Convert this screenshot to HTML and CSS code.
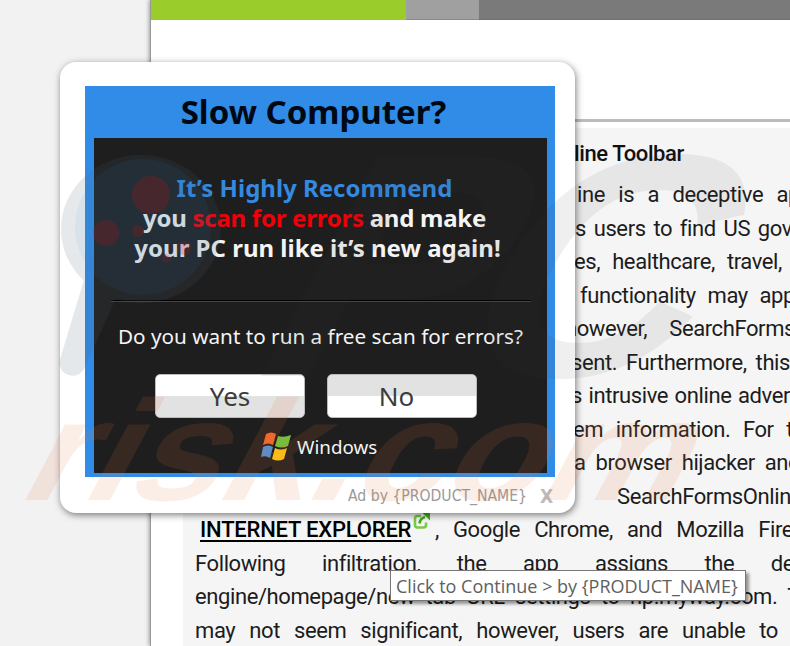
FILE: index.html
```html
<!DOCTYPE html>
<html lang="en">
<head>
  <meta charset="UTF-8">
  <meta name="viewport" content="width=device-width, initial-scale=1.0">
  <title>Online Toolbar</title>
  <link rel="stylesheet" href="styles.css">
</head>
<body>
  <div class="page">
    <div class="topbar">
      <div class="tab green"></div>
      <div class="tab light"></div>
      <div class="tab dark"></div>
    </div>
    <div class="divider"></div>
    <div class="article">
      <h2>line Toolbar</h2>
      <p class="line l1">ine is a deceptive ap</p>
      <p class="line l2">s users to find US gov</p>
      <p class="line l3">es, healthcare, travel,</p>
      <p class="line l4">functionality may app</p>
      <p class="line l5">however, SearchForms</p>
      <p class="line l6">sent. Furthermore, this</p>
      <p class="line l7">s intrusive online adver</p>
      <p class="line l8">em information. For t</p>
      <p class="line l9">a browser hijacker and</p>
      <p class="line l10">SearchFormsOnline</p>
      <p class="line l11"><a class="ie" href="#">INTERNET EXPLORER</a><svg class="ext" width="18" height="18" viewBox="0 0 18 18"><path d="M8 4H4.500Q2 4 2 6.500V13Q2 15.500 4.500 15.500H10.500Q13 15.500 13 13V10.500" fill="none" stroke="#7ac943" stroke-width="2.600"/><path d="M6.500 11.500Q7 6.500 12 5" fill="none" stroke="#3fae1c" stroke-width="2.600"/><path d="M9.500 1H17V8.500Z" fill="#3fae1c"/></svg>, Google Chrome, and Mozilla Fire</p>
      <p class="line l12">Following infiltration, the app assigns the de</p>
      <p class="line l13">engine/homepage/new tab URL settings to hp.myway.com. T</p>
      <p class="line l14">may not seem significant, however, users are unable to</p>
    </div>
  </div>

  <div class="popup">
    <div class="ad">
      <div class="ad-title">Slow Computer?</div>
      <div class="ad-body">
        <div class="msg blue">It’s Highly Recommend</div>
        <div class="msg m2">you <span class="red">scan for errors</span> and make</div>
        <div class="msg m3">your PC run like it’s new again!</div>
        <div class="rule"></div>
        <div class="question">Do you want to run a free scan for errors?</div>
        <div class="buttons">
          <button class="btn yes">Yes</button>
          <button class="btn no">No</button>
        </div>
        <div class="brand">
          <svg width="31" height="30" viewBox="0 0 31 30">
            <path d="M5 2Q10 -1 15 2L12 13Q7 10 2 13Z" fill="#f2672a"/>
            <path d="M17 4Q23 6 30 3L27 14Q20 17 14 14Z" fill="#7cbb3c"/>
            <path d="M2 15Q7 12 12 15L9 26Q5 23 0 25Z" fill="#4d8fd6"/>
            <path d="M14 16Q20 19 26 16L23 27Q17 30 11 27Z" fill="#fcc612"/>
          </svg>
          <span>Windows</span>
        </div>
      </div>
    </div>
    <div class="ad-by"><span>Ad by {PRODUCT_NAME}</span><b>X</b></div>
  </div>

  <svg class="watermark" width="790" height="646" viewBox="0 0 790 646">
    <g class="lens">
      <path d="M84 280L61 356A13 13 0 0 0 84 369L116 298Z"/>
      <ellipse cx="141" cy="229" rx="80" ry="74"/>
    </g>
    <circle class="glass" cx="143" cy="227" r="68"/>
    <g class="dots">
      <circle cx="151" cy="195" r="19"/>
      <circle cx="106" cy="233" r="13"/>
      <circle cx="138" cy="231" r="6"/>
      <circle cx="166" cy="258" r="4"/>
      <circle cx="184" cy="248" r="7"/>
    </g>
    <g class="pc" transform="translate(0 376) skewX(-28)">
      <text x="240" y="0" textLength="215" lengthAdjust="spacingAndGlyphs">P</text>
      <text x="435" y="0" textLength="235" lengthAdjust="spacingAndGlyphs">C</text>
    </g>
    <g class="risk" transform="translate(0 500) skewX(-28)">
      <text x="14" y="0" textLength="662" lengthAdjust="spacingAndGlyphs">risk.com</text>
    </g>
  </svg>

  <div class="tooltip">Click to Continue &gt; by {PRODUCT_NAME}</div>
</body>
</html>
```
FILE: styles.css
```css
* {
  box-sizing: border-box;
}
body {
  margin: 0;
  width: 790px;
  height: 646px;
  overflow: hidden;
  position: relative;
  background: #f2f2f2;
  font-family: Roboto, sans-serif;
}
.page {
  margin-left: 150px;
  height: 646px;
  background: #fff;
  border-left: 1px solid #999;
  box-shadow: -1px 0 4px rgba(0,0,0,0.35);
  overflow: hidden;
}
.topbar {
  display: flex;
  height: 20px;
}
.tab.green {
  width: 255px;
  background: #9acd2b;
}
.tab.light {
  width: 73px;
  background: #a0a0a0;
  border-bottom: 1px solid #888;
}
.tab.dark {
  flex: 1;
  background: #7a7a7a;
  border-bottom: 1px solid #707070;
}
.divider {
  height: 3px;
  margin-top: 99px;
  background: #bcbcbc;
}
.article {
  margin: 6px 0 0 32px;
  height: 530px;
  padding-top: 9px;
  background: #f5f5f5;
  color: #1c1c1c;
}
h2 {
  margin: 0 0 7px 391px;
  height: 34px;
  line-height: 34px;
  font-size: 22px;
  font-weight: 500;
  letter-spacing: -0.4px;
  color: #111;
}
.line {
  margin: 0 -2px 0 12px;
  height: 33.5px;
  line-height: 33.5px;
  font-size: 22px;
  font-weight: 400;
  letter-spacing: -0.4px;
  text-align: justify;
  text-align-last: justify;
  white-space: nowrap;
}
.l1 { margin-left: 394px; margin-right: -10px; }
.l2 { margin-left: 392px; }
.l3 { margin-left: 391px; margin-right: 8px; }
.l4 { margin-left: 397px; margin-right: -5px; }
.l5 { margin-left: 382px; margin-right: -5px; }
.l6 { margin-left: 388px; margin-right: 0; }
.l7 { margin-left: 388px; margin-right: 0; }
.l8 { margin-left: 390px; margin-right: -3px; }
.l9 { margin-left: 391px; margin-right: -10px; }
.l10 { margin-left: 434px; margin-right: -12px; }
.l11 { margin-left: 17px; margin-right: -3px; }
.l12 { margin-right: -4px; }
.l13 { margin-right: -10px; }
.l14 { margin-right: 12px; }
.ie {
  display: inline-block;
  width: 208px;
  height: 27px;
  line-height: 33.5px;
  text-align-last: left;
  letter-spacing: -0.2px;
  color: #000;
  font-weight: 500;
  text-decoration: underline;
  text-decoration-thickness: 2px;
  text-underline-offset: 3px;
}
.ext {
  margin: 0 4px 0 5px;
  position: relative;
  top: -7px;
}
.popup {
  position: absolute;
  left: 60px;
  top: 62px;
  width: 515px;
  height: 451px;
  padding: 24px 20px 0 25px;
  background: #fff;
  border-radius: 16px;
  box-shadow: 1px 2px 7px rgba(0,0,0,0.5);
  font-family: "Noto Sans", sans-serif;
}
.ad {
  width: 470px;
  height: 391px;
  padding: 0 8px 5px 9px;
  background: #318ce8;
}
.ad-title {
  height: 52px;
  padding-right: 14px;
  line-height: 51px;
  text-align: center;
  font-size: 33px;
  font-weight: bold;
  color: #000814;
  white-space: nowrap;
}
.ad-body {
  height: 335px;
  padding-top: 35px;
  background: #1e1e1e;
  color: #f4f4f4;
  text-align: center;
}
.msg {
  height: 30px;
  padding-right: 12px;
  line-height: 30px;
  font-size: 24px;
  font-weight: bold;
  white-space: nowrap;
}
.m2 {
  letter-spacing: -0.25px;
}
.m3 {
  padding-right: 6px;
}
.blue {
  color: #348ae0;
}
.red {
  color: #f00008;
}
.rule {
  margin: 37px 16px 0 17px;
  height: 2px;
  background: #000;
  border-bottom: 1px solid #444;
}
.question {
  height: 30px;
  margin-top: 19px;
  line-height: 30px;
  font-size: 20.7px;
  white-space: nowrap;
}
.buttons {
  display: flex;
  gap: 22px;
  margin: 23px 0 0 61px;
}
.btn {
  width: 150px;
  height: 44px;
  padding: 0;
  border: 1px solid #bbb;
  border-radius: 5px;
  font-family: "Noto Sans", sans-serif;
  font-size: 26px;
  line-height: 42px;
  color: #3c3c3c;
}
.yes {
  background: linear-gradient(#fff 50%, #e2e2e2 50%);
}
.no {
  padding-right: 11px;
  background: linear-gradient(#e2e2e2 50%, #fff 50%);
}
.brand {
  display: flex;
  align-items: center;
  gap: 5px;
  margin: 14px 0 0 167px;
  font-size: 18.8px;
  line-height: 30px;
}
.ad-by {
  display: flex;
  justify-content: flex-end;
  gap: 13px;
  padding-right: 1px;
  line-height: 39px;
  font-family: "DejaVu Sans Condensed", "DejaVu Sans", sans-serif;
  font-size: 15.6px;
  color: #999;
}
.ad-by b {
  width: 14px;
  font-size: 19px;
  color: #bbb;
}
.watermark {
  position: absolute;
  left: 0;
  top: 0;
  pointer-events: none;
  font-family: "Liberation Sans", sans-serif;
  font-weight: bold;
}
.lens {
  fill: #506070;
  opacity: 0.14;
}
.glass {
  fill: #3090e8;
  opacity: 0.07;
}
.dots {
  fill: #d01010;
  opacity: 0.2;
}
.pc {
  font-size: 318px;
  fill: #404040;
  opacity: 0.08;
}
.risk {
  font-size: 143px;
  fill: #e6783c;
  opacity: 0.12;
}
.tooltip {
  position: absolute;
  left: 390px;
  top: 570px;
  width: 356px;
  height: 31px;
  padding-left: 5px;
  border: 1px solid #767676;
  background: #fff;
  box-shadow: 3px 3px 3px rgba(0,0,0,0.4);
  font-family: "Open Sans", sans-serif;
  font-size: 18px;
  line-height: 30px;
  color: #606060;
  white-space: nowrap;
}
```
